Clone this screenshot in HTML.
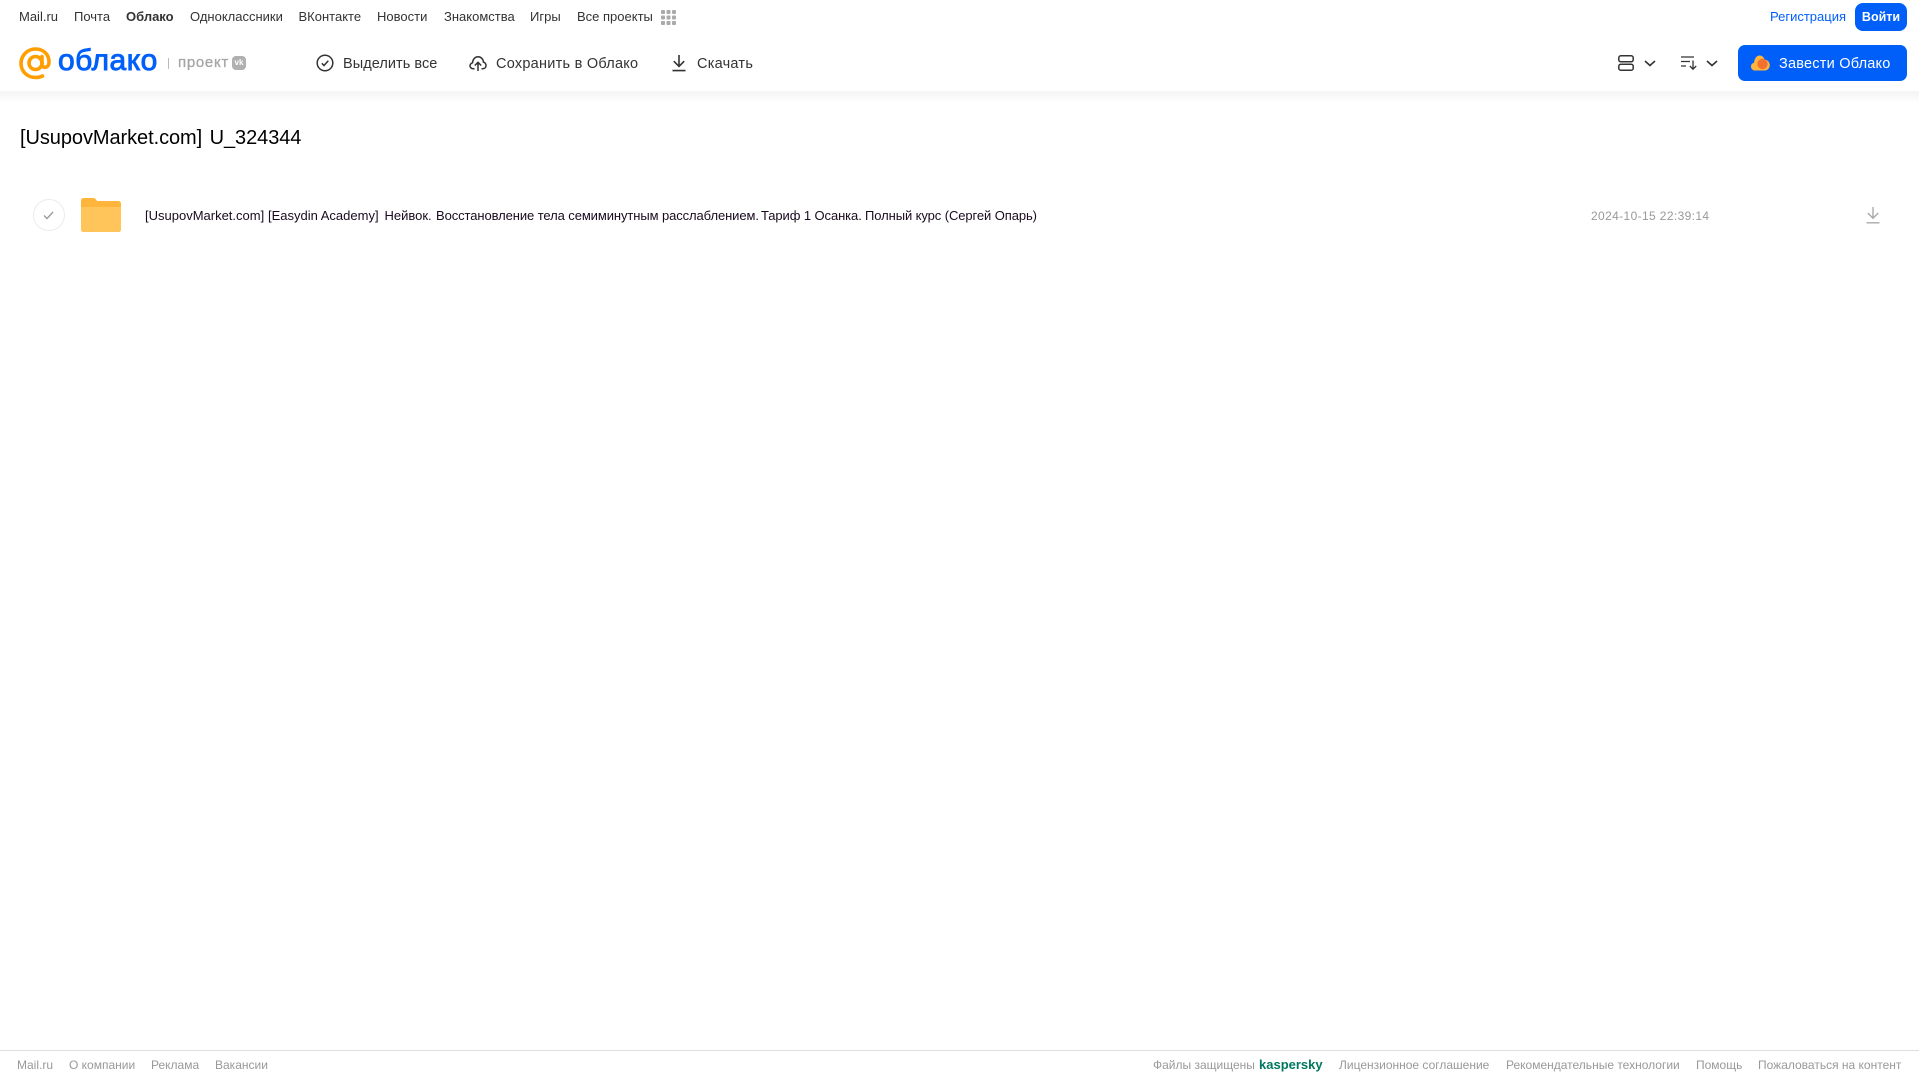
<!DOCTYPE html>
<html lang="ru"><head><meta charset="utf-8"><title>Облако</title>
<style>
html,body{margin:0;padding:0;width:1919px;height:1079px;overflow:hidden;background:#fff;font-family:"Liberation Sans",sans-serif}
.t{position:absolute;white-space:nowrap;line-height:16px}
.n{font-size:13px;color:#333;top:9px}
.b{font-size:14.5px;color:#333;top:56px;letter-spacing:.2px}
.f{font-size:12px;color:#999;top:1057px}
.r{font-size:13px;color:#1a0a1f;top:208px}
svg{position:absolute;overflow:visible}
</style></head><body>
<div style="position:absolute;left:0;top:91px;width:1919px;height:12px;background:linear-gradient(#f4f4f4,#fff)"></div>

<span class="t n" style="left:19px">Mail.ru</span>
<span class="t n" style="left:74px">Почта</span>
<span class="t n" style="left:126px;font-weight:bold">Облако</span>
<span class="t n" style="left:190px">Одноклассники</span>
<span class="t n" style="left:298.500px">ВКонтакте</span>
<span class="t n" style="left:377px">Новости</span>
<span class="t n" style="left:444px">Знакомства</span>
<span class="t n" style="left:530px">Игры</span>
<span class="t n" style="left:577px">Все проекты</span>
<svg style="left:661px;top:10px" width="15" height="15" fill="#aaa"><rect width="4" height="4" x="0" y="0" rx="1"/><rect width="4" height="4" x="5.500" y="0" rx="1"/><rect width="4" height="4" x="11" y="0" rx="1"/><rect width="4" height="4" x="0" y="5.500" rx="1"/><rect width="4" height="4" x="5.500" y="5.500" rx="1"/><rect width="4" height="4" x="11" y="5.500" rx="1"/><rect width="4" height="4" x="0" y="11" rx="1"/><rect width="4" height="4" x="5.500" y="11" rx="1"/><rect width="4" height="4" x="11" y="11" rx="1"/></svg>
<span class="t n" style="left:1770px;color:#005ff9">Регистрация</span>
<div style="position:absolute;left:1855px;top:3px;width:52px;height:28px;background:#005ff9;border-radius:8px;color:#fff;font-size:12.500px;font-weight:bold;line-height:28px;text-align:center">Войти</div>

<svg style="left:19px;top:47px" width="33" height="33" viewBox="0 0 33 33" fill="none" stroke="#ff9e00" stroke-width="3.600"><circle cx="16.500" cy="16" r="6.500"/><path d="M23 9.500V17.500C23 21.500 29.800 21.500 30 15.500C30.300 7.500 24.500 2 16.500 2C8.500 2 2 8.500 2 16.500C2 24.500 8.500 30.500 16.500 30.500C19.500 30.500 21.500 30 23.500 29" stroke-linecap="round"/></svg>
<span class="t" style="left:58px;top:45px;font-size:30px;line-height:32px;color:#005ff9;-webkit-text-stroke:.9px #005ff9;letter-spacing:.5px">облако</span>
<div style="position:absolute;left:168px;top:58px;width:1px;height:11px;background:#bbb"></div>
<span class="t" style="left:178px;top:55px;font-size:15px;color:#a5a5a5;-webkit-text-stroke:.3px #a5a5a5;letter-spacing:.7px">проект</span>
<div style="position:absolute;left:232px;top:56px;width:14px;height:14px;border-radius:4px;background:#b0b0b0;color:#fff;font-size:8px;line-height:14px;font-weight:bold;text-align:center">vk</div>

<svg style="left:316px;top:54px" width="18" height="18" viewBox="0 0 18 18" fill="none" stroke="#333" stroke-width="1.500"><circle cx="9" cy="9" r="7.800"/><path d="M5.800 9.300L8 11.500L12.300 6.700"/></svg>
<span class="t b" style="left:343px;letter-spacing:.05px">Выделить все</span>
<svg style="left:469px;top:54px" width="18" height="18" viewBox="0 0 18 18" fill="none" stroke="#333" stroke-width="1.500"><path d="M5.500 14.800H4.500C2.300 14.800 .8 13.200 1 11.500C1.200 10 2 9.300 3.500 8.800C3.800 5 6.200 2.800 9 2.800C12 2.800 14.200 5 14.500 8.200C16 8.500 17.200 10 17 11.800C16.800 13.500 15.500 14.800 13.500 14.800H12.500M9 17V8.500M5.800 11.500L9 8.300L12.200 11.500"/></svg>
<span class="t b" style="left:496px;letter-spacing:.25px">Сохранить в Облако</span>
<svg style="left:671px;top:54px" width="16" height="18" viewBox="0 0 16 18" fill="none" stroke="#333" stroke-width="1.600"><path d="M8 1V12M2.800 7.200L8 12.400L13.200 7.200M1.500 16.600H14.500"/></svg>
<span class="t b" style="left:697px;letter-spacing:.25px">Скачать</span>

<svg style="left:1618px;top:55px" width="16" height="16" viewBox="0 0 16 16" fill="none" stroke="#333" stroke-width="1.500"><rect x=".8" y=".8" width="14.400" height="6" rx="2"/><rect x=".8" y="9.200" width="14.400" height="6" rx="2"/></svg>
<svg style="left:1644px;top:60px" width="12" height="7" viewBox="0 0 12 7" fill="none" stroke="#333" stroke-width="1.600"><path d="M1 1L6 5.500L11 1"/></svg>
<svg style="left:1681px;top:56px" width="17" height="14" viewBox="0 0 17 14" fill="none" stroke="#333" stroke-width="1.300"><path d="M0 1H13M0 5.500H9M0 10H5M12 4.500V13M8.800 10L12 13.200L15.200 10"/></svg>
<svg style="left:1706px;top:60px" width="12" height="7" viewBox="0 0 12 7" fill="none" stroke="#333" stroke-width="1.600"><path d="M1 1L6 5.500L11 1"/></svg>
<div style="position:absolute;left:1738px;top:45px;width:169px;height:36px;background:#005ff9;border-radius:7px"></div>
<svg style="left:1751px;top:55px" width="19" height="16" viewBox="0 0 19 16"><path d="M4 15.500C1.500 15.500 0 13.500 0 11.500C0 9.500 1.300 8.200 3 7.800C3.500 3 6 .5 8.500 .5C11 .5 12.800 2 13.500 4.500C16.800 4.800 18.800 7.500 18.800 10C18.800 13.200 16.500 15.500 13.500 15.500Z" fill="#ffb53c"/><circle cx="11.500" cy="9" r="5.200" fill="#f4702e"/></svg>
<span class="t" style="left:1779px;top:56px;font-size:14.500px;color:#fff;letter-spacing:.22px">Завести Облако</span>

<span class="t" style="left:20px;top:126px;font-size:20px;line-height:24px;color:#000;letter-spacing:-.07px;word-spacing:2px">[UsupovMarket.com] U_324344</span>

<div style="position:absolute;left:33px;top:199px;width:30px;height:30px;border:1px solid #ececec;border-radius:50%"></div>
<svg style="left:43px;top:211px" width="11" height="9" viewBox="0 0 11 9" fill="none" stroke="#999" stroke-width="1.300"><path d="M1 4.500L4 7.500L10 1"/></svg>
<svg style="left:81px;top:198px" width="40" height="34" viewBox="0 0 40 34"><path d="M0 3C0 1 1 0 3 0H12C14 0 15 1 16 3H37C39 3 40 4 40 6V31C40 33 39 34 37 34H3C1 34 0 33 0 31Z" fill="#ffb53c"/><path d="M0 9H40V31C40 33 39 34 37 34H3C1 34 0 33 0 31Z" fill="#ffc45a"/></svg>
<span class="t r" style="left:145px">[UsupovMarket.com]</span>
<span class="t r" style="left:268px">[Easydin Academy]</span>
<span class="t r" style="left:384.500px">Нейвок.</span>
<span class="t r" style="left:436px;letter-spacing:-.09px">Восстановление тела семиминутным расслаблением.</span>
<span class="t r" style="left:761px;letter-spacing:-.09px">Тариф 1 Осанка.</span>
<span class="t r" style="left:865px;letter-spacing:-.09px">Полный курс (Сергей Опарь)</span>
<span class="t" style="left:1591px;top:208px;font-size:12px;color:#999;letter-spacing:.37px">2024-10-15 22:39:14</span>
<svg style="left:1866px;top:207px" width="14" height="17" viewBox="0 0 14 17" fill="none" stroke="#aaa" stroke-width="1.400"><path d="M7 0V11M1.800 6L7 11.200L12.200 6M0.500 15.800H13.500"/></svg>

<div style="position:absolute;left:0;top:1050px;width:1919px;height:1px;background:#ddd"></div>
<span class="t f" style="left:17px">Mail.ru</span>
<span class="t f" style="left:69px">О компании</span>
<span class="t f" style="left:151px">Реклама</span>
<span class="t f" style="left:215px">Вакансии</span>
<span class="t f" style="left:1153px">Файлы защищены</span>
<span class="t f" style="left:1259px;font-size:13px;font-weight:bold;color:#00785f">kaspersky</span>
<span class="t f" style="left:1339px">Лицензионное соглашение</span>
<span class="t f" style="left:1506px">Рекомендательные технологии</span>
<span class="t f" style="left:1696px">Помощь</span>
<span class="t f" style="left:1758px">Пожаловаться на контент</span>
</body></html>
